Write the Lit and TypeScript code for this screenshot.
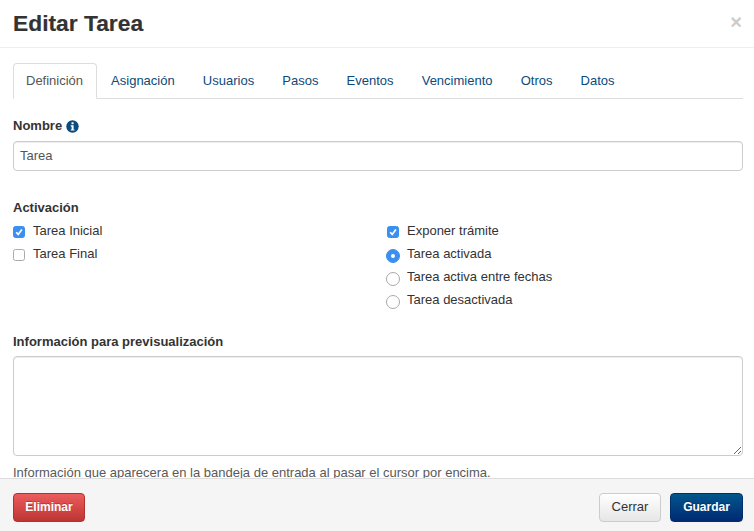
import { LitElement, html, css } from "lit";
import { customElement } from "lit/decorators.js";

const TABS = ["Definición", "Asignación", "Usuarios", "Pasos", "Eventos", "Vencimiento", "Otros", "Datos"];

@customElement("app-root")
export class AppRoot extends LitElement {
  static styles = css`
    :host { display: block; width: 754px; height: 531px; font-family: "Liberation Sans", Arial, sans-serif; font-size: 13px; line-height: 18px; color: #333; background: #fff; overflow: hidden; }
    * { box-sizing: border-box; }
    .modal { display: flex; flex-direction: column; height: 531px; }
    .header { height: 48px; flex: none; display: flex; justify-content: space-between; padding: 0 12px 0 13px; border-bottom: 1px solid #eee; }
    h3 { margin: 0; font-size: 22.8px; line-height: 46px; font-weight: 700; color: #333; -webkit-text-stroke: 0.2px #333; }
    .close { font-size: 20px; font-weight: 700; color: #ccc; line-height: 44px; }
    .body { flex: 1; min-height: 0; overflow: hidden; padding: 15px 11px 0 13px; }
    .tabs { display: flex; height: 36px; border-bottom: 1px solid #ddd; }
    .tab { height: 36px; padding: 8px 12px 0; color: #0d4a7a; white-space: nowrap; margin-right: 2.15px; border: 1px solid transparent; }
    .tab.active { color: #555; background: #fff; border-color: #ddd #ddd #fff; border-radius: 4px 4px 0 0; padding-right: 13px; margin-right: 1px; }
    .label { font-weight: 700; display: flex; align-items: center; gap: 4px; height: 18px; }
    .name-label { margin-top: 18px; }
    .info { width: 13px; height: 13px; flex: none; }
    .input { display: block; width: 100%; height: 30px; margin: 6px 0 0; padding: 3px 6px 5px; border: 1px solid #ccc; border-radius: 4px; font: inherit; color: #555; box-shadow: inset 0 1px 1px rgba(0,0,0,.075); outline: none; }
    .act-label { margin-top: 28px; }
    .cols { display: grid; grid-template-columns: 374px 1fr; margin-top: 5px; height: 99px; }
    .col { display: flex; flex-direction: column; gap: 5px; }
    .opt { display: flex; align-items: flex-start; gap: 8px; height: 18px; white-space: nowrap; }
    .box { width: 12px; height: 12px; flex: none; margin-top: 3.5px; border-radius: 2.5px; border: 1px solid #aaa; background: #fff; display: flex; align-items: center; justify-content: center; }
    .box.on { background: #3b8ff0; border-color: #3b8ff0; }
    .box svg { width: 10px; height: 10px; }
    .radio { width: 14px; height: 14px; flex: none; margin: 4px -1px 0; border-radius: 50%; border: 1px solid #aaa; background: #fff; display: flex; align-items: center; justify-content: center; }
    .radio.on { background: #3b8ff0; border-color: #3b8ff0; }
    .radio.on::after { content: ""; width: 4px; height: 4px; border-radius: 50%; background: #fff; }
    .info-label { margin-top: 12px; }
    .area { display: block; width: 100%; height: 100px; margin: 5px 0 0; padding: 4px 6px; border: 1px solid #ccc; border-radius: 4px; font: inherit; box-shadow: inset 0 1px 1px rgba(0,0,0,.075); outline: none; resize: vertical; }
    .help { margin: 8px 0 0; color: #595959; white-space: nowrap; }
    .footer { height: 53px; flex: none; background: #f5f5f5; border-top: 1px solid #ddd; display: flex; align-items: flex-start; justify-content: space-between; padding: 14px 11px 0 13px; }
    .right { display: flex; gap: 9px; }
    .btn { height: 29px; border-radius: 4px; font: inherit; font-weight: 400; padding: 0 0 1px; display: flex; align-items: center; justify-content: center; }
    .danger { width: 72px; font-size: 12px; font-weight: 700; color: #fff; border: 1px solid #b13030; background: linear-gradient(#ec5c5c, #bd3532); text-shadow: 0 -1px 0 rgba(0,0,0,.25); }
    .plain { width: 62px; color: #333; border: 1px solid #ccc; background: linear-gradient(#fff, #e6e6e6); }
    .primary { width: 73px; font-size: 12px; font-weight: 700; color: #fff; border: 1px solid #00306b; background: linear-gradient(#03568c, #002a73); text-shadow: 0 -1px 0 rgba(0,0,0,.25); }
  `;

  private check() {
    return html`<svg viewBox="0 0 10 10"><path d="M2.2 5.2 4.2 7.4 7.9 2.6" fill="none" stroke="#fff" stroke-width="1.7"/></svg>`;
  }

  render() {
    return html`
      <div class="modal">
        <div class="header"><h3>Editar Tarea</h3><span class="close">×</span></div>
        <div class="body">
          <div class="tabs">
            ${TABS.map((t, i) => html`<div class="tab ${i === 0 ? "active" : ""}">${t}</div>`)}
          </div>
          <div class="label name-label">Nombre
            <svg class="info" viewBox="0 0 13 13"><circle cx="6.5" cy="6.5" r="6.2" fill="#0d4a7a"/><rect x="5.5" y="2.2" width="2.1" height="2" rx=".5" fill="#fff"/><path d="M4.7 5.3H7.6V9.4H8.5V10.6H4.7V9.4H5.6V6.5H4.7Z" fill="#fff"/></svg>
          </div>
          <input class="input" value="Tarea" />
          <div class="label act-label">Activación</div>
          <div class="cols">
            <div class="col">
              <div class="opt"><span class="box on">${this.check()}</span>Tarea Inicial</div>
              <div class="opt"><span class="box"></span>Tarea Final</div>
            </div>
            <div class="col">
              <div class="opt"><span class="box on">${this.check()}</span>Exponer trámite</div>
              <div class="opt"><span class="radio on"></span>Tarea activada</div>
              <div class="opt"><span class="radio"></span>Tarea activa entre fechas</div>
              <div class="opt"><span class="radio"></span>Tarea desactivada</div>
            </div>
          </div>
          <div class="label info-label">Información para previsualización</div>
          <textarea class="area"></textarea>
          <p class="help">Información que aparecera en la bandeja de entrada al pasar el cursor por encima.</p>
        </div>
        <div class="footer">
          <button class="btn danger">Eliminar</button>
          <div class="right">
            <button class="btn plain">Cerrar</button>
            <button class="btn primary">Guardar</button>
          </div>
        </div>
      </div>
    `;
  }
}
